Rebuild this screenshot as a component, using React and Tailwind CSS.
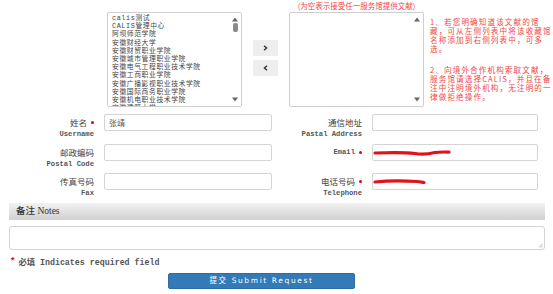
import React from "react";

const leftItems = [
  "calis测试",
  "CALIS管理中心",
  "阿坝师范学院",
  "安徽财经大学",
  "安徽财贸职业学院",
  "安徽城市管理职业学院",
  "安徽电气工程职业技术学院",
  "安徽工商职业学院",
  "安徽广播影视职业技术学院",
  "安徽国际商务职业学院",
  "安徽机电职业技术学院",
  "安徽建筑大学",
];

function Arrows({ thumb }) {
  return (
    <>
      <svg className="absolute right-[3px] top-[4px]" width="6" height="5" viewBox="0 0 6 5">
        <path d="M0 4.5 L3 0.5 L6 4.5 Z" fill="#666" />
      </svg>
      {thumb && <div className="absolute right-[3px] top-[10px] w-[5px] h-[9px] rounded-[2px] bg-[#8a8a8a]" />}
      <svg className="absolute right-[3px] bottom-[4px]" width="6" height="5" viewBox="0 0 6 5">
        <path d="M0 0.5 L3 4.5 L6 0.5 Z" fill="#666" />
      </svg>
    </>
  );
}

function Dot() {
  return <span className="inline-block w-[3px] h-[3px] rounded-full bg-red-600 ml-[4px]" />;
}

function Label({ zh, en, req, w, mono }) {
  return (
    <div className={`${w} shrink-0 text-right`}>
      <div
        className={
          mono
            ? "h-[17px] flex items-center justify-end text-[7.2px] font-bold text-[#555] font-['Liberation_Mono',monospace]"
            : "h-[17px] flex items-center justify-end text-[8.5px] text-[#444] font-['Noto_Sans_CJK_SC',sans-serif]"
        }
      >
        {zh}
        {req && <Dot />}
      </div>
      {en && (
        <div className="text-[7.2px] leading-[8px] mt-[-1px] font-bold text-[#555] font-['Liberation_Mono',monospace] whitespace-nowrap">
          {en}
        </div>
      )}
    </div>
  );
}

function Input({ w, children }) {
  return (
    <div className={`${w} shrink-0 h-[17px] border border-[#d4d4d4] rounded-[2px] bg-white relative flex items-center`}>
      {children}
    </div>
  );
}

function Scribble({ w, d }) {
  return (
    <svg className="absolute left-[0px] top-[3px]" width={w} height="10" viewBox={`0 0 ${w} 10`}>
      <path d={d} stroke="#e3111a" strokeWidth="3.2" fill="none" strokeLinecap="round" />
    </svg>
  );
}

export default function App() {
  return (
    <div className="w-[553px] h-[294px] bg-white overflow-hidden relative font-['Noto_Sans_CJK_SC',sans-serif]">
      {/* Top section */}
      <div className="flex items-start pl-[107px]">
        <div className="mt-[12px] w-[135px] h-[95px] border border-[#cfcfcf] rounded-[2px] relative overflow-hidden">
          <div className="pl-[4px] pt-[1px] text-[6.8px] leading-[8.2px] tracking-[0.6px] text-[#444] font-['Liberation_Mono','Noto_Sans_CJK_SC',monospace] whitespace-nowrap">
            {leftItems.map((t) => (
              <div key={t} className="h-[8.2px]">{t}</div>
            ))}
          </div>
          <div className="absolute right-0 top-0 bottom-0 w-[10px] bg-white" />
          <Arrows thumb />
        </div>
        <div className="ml-[11px] mt-[40px] flex flex-col gap-[4px]">
          <div className="w-[25px] h-[16px] bg-[#eeeeee] rounded-[1px] flex items-center justify-center">
            <svg width="5" height="6" viewBox="0 0 5 6">
              <path d="M1 0.8 L3.6 3 L1 5.2" stroke="#333" strokeWidth="1.4" fill="none" />
            </svg>
          </div>
          <div className="w-[25px] h-[16px] bg-[#eeeeee] rounded-[1px] flex items-center justify-center">
            <svg width="5" height="6" viewBox="0 0 5 6">
              <path d="M4 0.8 L1.4 3 L4 5.2" stroke="#333" strokeWidth="1.4" fill="none" />
            </svg>
          </div>
        </div>
        <div className="ml-[11px] flex flex-col items-center">
          <div className="h-[12px] leading-[12px] text-[7.5px] text-[#f04848] whitespace-nowrap">
            (为空表示接受任一服务馆提供文献)
          </div>
          <div className="w-[135px] h-[95px] border border-[#cfcfcf] rounded-[2px] relative">
            <Arrows />
          </div>
        </div>
        <div className="ml-[6px] mt-[17px] text-[7.6px] tracking-[1.1px] text-[#f04848] whitespace-nowrap">
          <div className="h-[9px] leading-[9px]">1、若您明确知道该文献的馆</div>
          <div className="h-[9px] leading-[9px]">藏，可从左侧列表中将该收藏馆</div>
          <div className="h-[9px] leading-[9px]">名称添加到右侧列表中，可多</div>
          <div className="h-[9px] leading-[9px]">选。</div>
          <div className="h-[9px] leading-[9px] mt-[12px]">2、向境外合作机构索取文献，</div>
          <div className="h-[9px] leading-[9px]">服务馆请选择CALIS，并且在备</div>
          <div className="h-[9px] leading-[9px]">注中注明境外机构，无注明的一</div>
          <div className="h-[9px] leading-[9px]">律做拒绝操作。</div>
        </div>
      </div>

      {/* Form rows */}
      <div className="mt-[7px] flex flex-col">
        <div className="flex h-[17px]">
          <Label w="w-[94px]" zh="姓名" en="Username" req />
          <div className="ml-[10px]">
            <Input w="w-[168px]">
              <span className="pl-[4px] text-[8px] text-[#555]">张靖</span>
            </Input>
          </div>
          <Label w="w-[90px]" zh="通信地址" en="Pastal Address" />
          <div className="ml-[10px]">
            <Input w="w-[166px]" />
          </div>
        </div>
        <div className="flex h-[17px] mt-[13px]">
          <Label w="w-[94px]" zh="邮政编码" en="Postal Code" />
          <div className="ml-[10px]">
            <Input w="w-[168px]" />
          </div>
          <Label w="w-[90px]" zh="Email" req mono />
          <div className="ml-[10px]">
            <Input w="w-[166px]">
              <Scribble w={78} d="M2 5 C 15 4.5, 30 4, 42 5.5 C 50 7, 56 6, 62 4.5 C 68 3.8, 73 4, 76 4.2" />
            </Input>
          </div>
        </div>
        <div className="flex h-[17px] mt-[12px]">
          <Label w="w-[94px]" zh="传真号码" en="Fax" />
          <div className="ml-[10px]">
            <Input w="w-[168px]" />
          </div>
          <Label w="w-[90px]" zh="电话号码" en="Telephone" req />
          <div className="ml-[10px]">
            <Input w="w-[166px]">
              <Scribble w={54} d="M2 5 C 15 3.5, 30 3.5, 44 4.5 C 48 5, 50 5.5, 51 5.5" />
            </Input>
          </div>
        </div>
      </div>

      {/* Notes */}
      <div className="mx-[9px] w-[536px] mt-[13px] h-[17px] bg-gradient-to-b from-[#f2f2f2] to-[#d0d0d0] flex items-center pl-[7px] text-[9.5px] text-[#333] font-['Liberation_Serif','Noto_Sans_CJK_SC',serif] font-medium">
        备注 Notes
      </div>
      <div className="ml-[9px] mt-[6px] w-[536px] h-[24px] border border-[#d4d4d4] rounded-[3px] relative">
        <svg className="absolute right-[1px] bottom-[1px]" width="5" height="5" viewBox="0 0 5 5">
          <path d="M4.5 1 L1 4.5 M4.5 3 L3 4.5" stroke="#999" strokeWidth="0.7" />
        </svg>
      </div>
      <div className="ml-[10px] mt-[7px] flex items-center h-[12px] text-[8.3px] text-[#555] font-['Liberation_Mono','Noto_Sans_CJK_SC',monospace] font-bold whitespace-nowrap">
        <span className="text-red-600 text-[9px] mr-[3px]">*</span>
        <span>必填 Indicates required field</span>
      </div>
      <div className="ml-[168px] mt-[4px] w-[187px] h-[16px] bg-[#337ab7] border border-[#2e6da4] rounded-[2px] flex items-center justify-center text-white text-[7.5px] tracking-[1.6px] font-['DejaVu_Sans','Noto_Sans_CJK_SC',sans-serif] whitespace-nowrap">
        提交 Submit Request
      </div>
    </div>
  );
}
